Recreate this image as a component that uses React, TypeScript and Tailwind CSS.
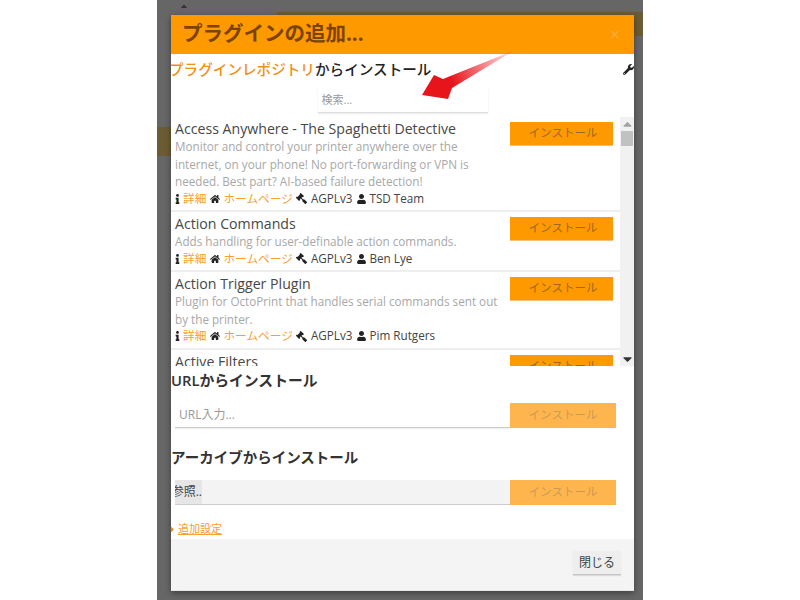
import { FaGavel, FaHome, FaInfo, FaUser, FaWrench, FaCaretRight, FaCaretUp, FaCaretDown } from "react-icons/fa";

const font = { fontFamily: '"Open Sans", "Noto Sans CJK JP", sans-serif' };

const plugins = [
  {
    name: "Access Anywhere - The Spaghetti Detective",
    desc: ["Monitor and control your printer anywhere over the", "internet, on your phone! No port-forwarding or VPN is", "needed. Best part? AI-based failure detection!"],
    author: "TSD Team",
  },
  {
    name: "Action Commands",
    desc: ["Adds handling for user-definable action commands."],
    author: "Ben Lye",
  },
  {
    name: "Action Trigger Plugin",
    desc: ["Plugin for OctoPrint that handles serial commands sent out", "by the printer."],
    author: "Pim Rutgers",
  },
  {
    name: "Active Filters",
    desc: ["Filters the terminal output."],
    author: "Gina",
  },
];

const PluginRow = ({ plugin }: { plugin: (typeof plugins)[number] }) => (
  <div className="flex border-b-2 border-[#eeeeee] pl-1 pr-[7px] pt-[3px] pb-[3.5px]">
    <div className="flex-1 min-w-0">
      <div className="text-[14.15px] leading-[18px] text-[#484848] whitespace-nowrap">{plugin.name}</div>
      {plugin.desc.map((line) => (
        <div key={line} className="text-[11.7px] leading-[17.5px] text-[#a8a8a8] whitespace-nowrap">
          {line}
        </div>
      ))}
      <div className="flex items-center h-[16px] text-[11.7px] text-[#444444] whitespace-nowrap">
        <FaInfo className="w-[5px] h-[10px] text-[#222222]" />
        <span className="ml-[3px] text-[#f7a030]">詳細</span>
        <FaHome className="ml-[4px] w-[10px] h-[10px] text-[#222222]" />
        <span className="ml-[3px] text-[#f7a030]">ホームページ</span>
        <FaGavel className="ml-[3px] w-[11px] h-[11px] text-[#222222] -scale-x-100" />
        <span className="ml-[4px]">AGPLv3</span>
        <FaUser className="ml-[5px] w-[9px] h-[10px] text-[#222222]" />
        <span className="ml-[3px]">{plugin.author}</span>
      </div>
    </div>
    <div className="shrink-0 w-[103px] h-[24px] mt-[2px] pl-[3px] bg-[#ff9900] text-[11.5px] leading-[21px] text-[#9a6a1e] text-center border-b border-[#f0c080]">
      インストール
    </div>
  </div>
);

const DisabledButton = () => (
  <div className="w-[106px] h-[25px] bg-[#ffb54d] text-[11.5px] leading-[23px] text-[#c99a55] text-center shrink-0">
    インストール
  </div>
);

export default function App() {
  return (
    <div className="w-[800px] h-[600px] bg-white overflow-hidden flex justify-center" style={font}>
      <div className="relative w-[486px] h-[600px] bg-[#666666] pt-[15px] pl-[14px]">
        {/* backdrop leftovers behind the modal */}
        <FaCaretUp className="absolute left-[22px] top-[1px] w-[10px] h-[10px] text-[#333333]" />
        <div className="absolute left-[120px] right-0 top-[12px] h-[24px] bg-[#6b5c33]" />
        <div className="absolute left-0 top-[127px] w-[14px] h-[29px] bg-[#6b5c33]" />

        <div className="relative w-[463px] h-[576px] bg-white flex flex-col shadow-[0_2px_6px_rgba(0,0,0,0.4)]">
          <div className="h-[39px] shrink-0 bg-[#ff9900] flex items-center justify-between pl-[11px] pr-[14px] pb-[2px]">
            <span className="text-[20.5px] font-bold text-[#7a4300]">プラグインの追加...</span>
            <span className="text-[18px] leading-none text-[#f6ac3c]">×</span>
          </div>

          <div className="h-[29px] mt-[1px] mb-[1px] shrink-0 flex items-center justify-between text-[14.6px] font-medium text-[#222222] whitespace-nowrap -ml-[2px]">
            <span>
              <span className="text-[#f0901a]">プラグインレポジトリ</span>からインストール
            </span>
            <FaWrench className="w-[11px] h-[11px] text-[#222222]" />
          </div>

          <div className="h-[32px] shrink-0 flex justify-center pt-[2px]">
            <div className="w-[170px] h-[26px] border-b border-[#dddddd] shadow-[0_1px_2px_rgba(0,0,0,0.08)] pl-[4px] text-[11px] leading-[26px] text-[#999999]">
              検索...
            </div>
          </div>

          <div className="h-[249px] shrink-0 flex">
            <div className="flex-1 min-w-0 overflow-hidden">
              {plugins.map((plugin) => (
                <PluginRow key={plugin.name} plugin={plugin} />
              ))}
            </div>
            <div className="w-[14px] shrink-0 bg-[#f1f1f1] flex flex-col items-center">
              <FaCaretUp className="w-[9px] h-[14px] text-[#a3a3a3]" />
              <div className="w-[12px] h-[15px] bg-[#c1c1c1]" />
              <div className="flex-1" />
              <FaCaretDown className="w-[9px] h-[14px] text-[#333333]" />
            </div>
          </div>

          <div className="h-[28px] shrink-0 flex items-center text-[14.8px] font-semibold text-[#333333] whitespace-nowrap">
            URLからインストール
          </div>
          <div className="h-[25px] mt-[9px] shrink-0 flex pl-[4px] pr-[18px]">
            <div className="flex-1 border-b border-[#cccccc] shadow-[0_1px_1px_rgba(0,0,0,0.06)] pl-[4px] text-[12px] leading-[24px] text-[#999999]">
              URL入力...
            </div>
            <DisabledButton />
          </div>

          <div className="h-[30px] mt-[15px] shrink-0 flex items-center text-[14.5px] font-semibold text-[#333333] whitespace-nowrap">
            アーカイブからインストール
          </div>
          <div className="h-[25px] mt-[7px] shrink-0 flex pl-[4px] pr-[18px]">
            <div className="flex-1 bg-[#f3f3f3] border-b border-[#cccccc] flex overflow-hidden">
              <div className="w-[27px] bg-[#e6e6e6] text-[12px] leading-[24px] text-[#444444] whitespace-nowrap overflow-hidden flex justify-end">
                参照..
              </div>
            </div>
            <DisabledButton />
          </div>

          <div className="flex items-center h-[20px] mt-[14px] -ml-[2px] shrink-0 text-[11px] text-[#f7a030]">
            <FaCaretRight className="w-[7px] h-[9px] text-[#e09020]" />
            <span className="underline ml-[2px]">追加設定</span>
          </div>

          <div className="flex-1 bg-[#f4f4f4] border-b border-[#e6e6e6] flex justify-end items-start pt-[12px] pr-[13px]">
            <div className="w-[48px] h-[24px] bg-[#eeeeee] border-b border-[#c4c4c4] shadow-[0_1px_1px_rgba(0,0,0,0.1)] text-[12px] leading-[23px] text-[#444444] text-center">
              閉じる
            </div>
          </div>
        </div>

        {/* red annotation arrow added on top of the screenshot */}
        <svg className="absolute left-[255px] top-[45px] w-[105px] h-[60px]" viewBox="0 0 105 60">
          <defs>
            <linearGradient id="arrow" x1="12" y1="48" x2="103" y2="5" gradientUnits="userSpaceOnUse">
              <stop offset="0.3" stopColor="#e8141c" />
              <stop offset="1" stopColor="#e8141c" stopOpacity="0.05" />
            </linearGradient>
          </defs>
          <path d="M103 5 L40 43 L36 54 L10 50 L22 30 L31 34 Z" fill="url(#arrow)" />
        </svg>
      </div>
    </div>
  );
}
